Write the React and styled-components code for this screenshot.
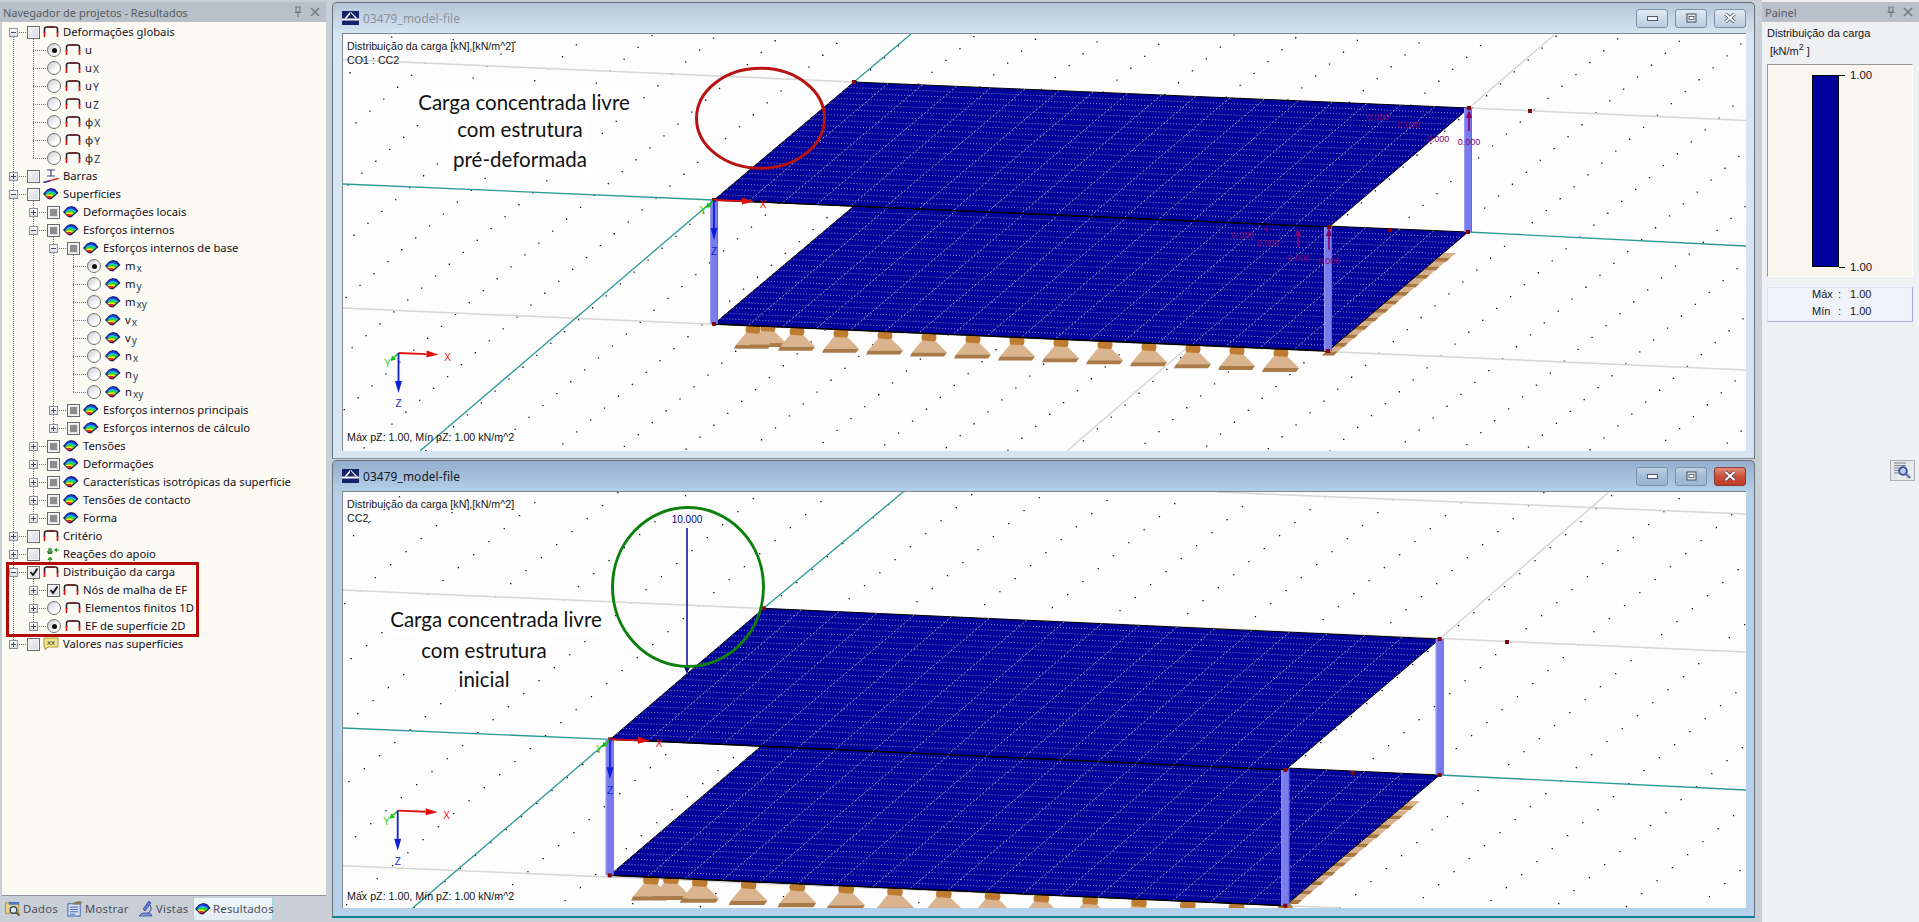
import React from 'react';
import styled, { createGlobalStyle } from 'styled-components';

const GlobalStyle = createGlobalStyle`
  html, body {
    margin: 0;
    height: 100%;
    overflow: hidden;
    background: #c9cfd7;
  }
  #root {
    height: 100%;
  }
`;

const Page = styled.div`
  width: 1919px;
  height: 922px;
  display: grid;
  grid-template-columns: 326px 6px 1423px 7px 157px;
  font-family: "Noto Sans", sans-serif;
  color: #14101c;
`;

const Panel = styled.div`
  grid-column: ${p => p.$col};
  display: flex;
  flex-direction: column;
  height: 922px;
  padding-top: 2px;
  box-sizing: border-box;
`;

const PanelHeader = styled.div`
  height: 20px;
  flex: none;
  background: #b8c0ca;
  color: #565c64;
  font-family: "Noto Sans", sans-serif;
  font-size: 11px;
  display: flex;
  align-items: center;
  padding: 0 6px 0 3px;
  gap: 7px;
  span {
    flex: 1;
  }
  svg {
    display: block;
  }
`;

const Tree = styled.div`
  position: relative;
  height: 874px;
  flex: none;
  margin-left: 2px;
  box-sizing: border-box;
  padding-top: 1px;
  background: #fbfaf3;
  border-bottom: 1px solid #8d9299;
  font-size: 11.25px;
`;

const Guide = styled.div`
  position: absolute;
  left: ${p => p.$x - 2}px;
  top: ${p => p.$from - 22}px;
  height: ${p => p.$to - p.$from}px;
  border-left: 1px dotted #707070;
`;

const Row = styled.div`
  position: relative;
  height: 18px;
  display: flex;
  align-items: center;
  padding-left: ${p => 7 + p.$level * 20}px;
  white-space: nowrap;
`;

const Label = styled.span`
  margin-bottom: 2px;
`;

const Slot = styled.div`
  position: relative;
  width: 18px;
  height: 18px;
  flex: none;
  &::after {
    content: "";
    position: absolute;
    left: 4px;
    right: 1px;
    top: 9px;
    border-top: 1px dotted #707070;
  }
`;

const Expander = styled.div`
  position: absolute;
  z-index: 1;
  left: 0;
  top: 5px;
  width: 7px;
  height: 7px;
  border: 1px solid #8b93a0;
  background: linear-gradient(#ffffff, #d9dde6);
  &::before {
    content: "";
    position: absolute;
    left: 1px;
    right: 1px;
    top: 3px;
    height: 1px;
    background: #3e4a70;
  }
  &::after {
    content: "";
    display: ${p => (p.$open ? 'none' : 'block')};
    position: absolute;
    top: 1px;
    bottom: 1px;
    left: 3px;
    width: 1px;
    background: #3e4a70;
  }
`;

const CheckBox = styled.div`
  position: relative;
  width: 11px;
  height: 11px;
  flex: none;
  border: 1px solid #6a6a6a;
  background: linear-gradient(135deg, #f6f7fa, #d3d7e0);
  display: flex;
  align-items: center;
  justify-content: center;
  box-shadow: inset 0 0 0 1px #f4f4f6;
`;

const PartialMark = styled.div`
  width: 7px;
  height: 7px;
  background: #8d8d8d;
`;

const Radio = styled.div`
  width: 12px;
  height: 12px;
  margin-right: 1px;
  flex: none;
  border: 1px solid #6f6f6f;
  border-radius: 50%;
  background: linear-gradient(135deg, #c9ccd4, #ffffff 70%);
  display: flex;
  align-items: center;
  justify-content: center;
`;

const RadioDot = styled.div`
  width: 5px;
  height: 5px;
  border-radius: 50%;
  background: #111;
`;

const IconSlot = styled.div`
  width: 16px;
  height: 14px;
  margin-left: 3px;
  margin-right: 4px;
  flex: none;
  svg {
    display: block;
  }
`;

const Sub = styled.span`
  font-size: ${p => (p.$low ? 10 : 10.5)}px;
  position: relative;
  top: ${p => (p.$low ? 2 : 1)}px;
  margin-left: 1px;
  color: #2c3a58;
`;

const RedFrame = styled.div`
  position: absolute;
  left: 4px;
  top: 540px;
  width: 187px;
  height: 69px;
  border: 3px solid #b40a0a;
`;

const TabBar = styled.div`
  flex: 1;
  display: flex;
  align-items: center;
  padding: 0 0 1px 3px;
  font-size: 11.3px;
  color: #4a5060;
`;

const Tab = styled.div`
  display: flex;
  align-items: center;
  gap: 2px;
  width: ${p => p.$w}px;
  height: 22px;
  padding: 0 1px;
  box-sizing: border-box;
  letter-spacing: 0.25px;
  background: ${p => (p.$active ? 'linear-gradient(#eef6f7, #e3edf2)' : 'transparent')};
  border-left: 1px solid ${p => (p.$active ? '#9adbe0' : 'transparent')};
  border-right: 1px solid ${p => (p.$active ? '#9adbe0' : 'transparent')};
  border-radius: 0 0 3px 3px;
  svg {
    display: block;
    flex: none;
  }
`;

const Center = styled.div`
  grid-column: 3;
  display: flex;
  flex-direction: column;
  padding-top: 2px;
  gap: 1px;
`;

const Window = styled.div`
  height: ${p => p.$height}px;
  flex: none;
  box-sizing: border-box;
  display: flex;
  flex-direction: column;
  padding: 0 8px 0 9px;
  border: 1px solid #6a7078;
  border-bottom: ${p => (p.$active ? '2px solid #0a7f92' : '1px solid #8a9099')};
  border-radius: 5px 5px 0 0;
  background: ${p =>
    p.$active
      ? 'linear-gradient(#93afcd 0, #b6d0e9 32px, #b4d0ea 100%)'
      : 'linear-gradient(#b4c6d8 0, #d8e5f2 32px, #d6e4f2 100%)'};
`;

const TitleBar = styled.div`
  height: 30px;
  flex: none;
  display: flex;
  align-items: center;
  gap: 4px;
  font-size: 11.9px;
  letter-spacing: 0.1px;
  color: ${p => (p.$active ? '#101828' : '#8c9098')};
  svg {
    display: block;
  }
  span {
    flex: 1;
  }
`;

const WinButton = styled.div`
  width: 30px;
  height: 17px;
  margin-left: 3px;
  flex: none;
  border: 1px solid ${p => (p.$close ? '#8a3a35' : '#7b8ea5')};
  border-radius: 3px;
  background: ${p =>
    p.$close
      ? 'linear-gradient(#e08a78, #c9503c 50%, #c03c28)'
      : p.$active
        ? 'linear-gradient(#bdd0e3, #a3bcd6 50%, #9cb6d1)'
        : 'linear-gradient(#e2eaf3, #cbd9e7 50%, #bccddf)'};
  display: flex;
  align-items: center;
  justify-content: center;
`;

const Canvas = styled.div`
  position: relative;
  flex: none;
  height: ${p => p.$height}px;
  background: #fdfdfd;
  border-top: 1px solid #7f868e;
  border-left: 1px solid #7f868e;
  overflow: hidden;
  svg {
    display: block;
  }
`;

const CanvasText = styled.div`
  position: absolute;
  left: 4px;
  top: ${p => p.$top}px;
  font-family: "Liberation Sans", Arial, sans-serif;
  font-size: 10.7px;
  line-height: 14px;
  color: #151515;
  white-space: nowrap;
`;

const NoteLine = styled.div`
  position: absolute;
  left: ${p => p.$x}px;
  top: ${p => p.$y}px;
  transform: translateX(-50%);
  font-family: Lato, "Open Sans", sans-serif;
  font-size: 20.5px;
  line-height: 30px;
  padding: 0 3px;
  color: #111;
  background: #fff;
  white-space: nowrap;
`;

const SidePanel = styled(Panel)`
  background: #eef0f2;
  font-family: "Liberation Sans", Arial, sans-serif;
`;

const SideBody = styled.div`
  flex: 1;
  display: flex;
  flex-direction: column;
  padding: 3px 5px 0;
  font-size: 11px;
  color: #14141e;
`;

const SideTitle = styled.div`
  line-height: 16px;
  height: 18px;
`;

const Unit = styled.div`
  line-height: 17px;
  height: 16px;
  padding-left: 3px;
  sup {
    font-size: 9px;
    line-height: 0;
  }
`;

const LegendBox = styled.div`
  height: 213px;
  width: 146px;
  margin-top: 5px;
  box-sizing: border-box;
  flex: none;
  display: flex;
  padding: 10px 0 9px 44px;
  background: #f9f6ef;
  border-top: 1px solid #9a9a9a;
  border-left: 1px solid #9a9a9a;
  border-right: 1px solid #fff;
  border-bottom: 1px solid #fff;
`;

const LegendBar = styled.div`
  width: 25px;
  background: #00009a;
  border: 1px solid #000;
`;

const LegendScale = styled.div`
  flex: 1;
  display: flex;
  flex-direction: column;
  justify-content: space-between;
  margin: -7px 0;
`;

const LegendTick = styled.div`
  display: flex;
  align-items: center;
  gap: 5px;
  height: 14px;
  font-size: 11.4px;
  &::before {
    content: "";
    width: 6px;
    height: 1px;
    background: #000;
  }
`;

const StatBox = styled.div`
  margin-top: 10px;
  width: 146px;
  height: 35px;
  box-sizing: border-box;
  flex: none;
  background: #f1f3fb;
  border: 1px solid #dfe2f0;
  border-right-color: #a9a9e2;
  border-bottom-color: #a9a9e2;
  display: grid;
  grid-template-columns: 26px 12px auto;
  grid-auto-rows: 17px;
  align-content: center;
  padding-left: 44px;
`;

const ZoomButton = styled.div`
  width: 23px;
  height: 19px;
  margin-top: 138px;
  margin-left: 123px;
  border: 1px solid #aaaeb3;
  background: #e6e8ea;
  svg {
    display: block;
  }
`;

const PinClose = () => (
  <>
    <svg width="10" height="12" viewBox="0 0 10 12">
      <path d="M3 1h4v5H3zM1.500 6.500h7M5 7v4" fill="none" stroke="#737982" strokeWidth="1.200" />
    </svg>
    <svg width="10" height="10" viewBox="0 0 10 10">
      <path d="M1 1l8 8M9 1l-8 8" stroke="#737982" strokeWidth="1.500" />
    </svg>
  </>
);

const BeamIcon = () => (
  <svg width="16" height="14" viewBox="0 0 16 14">
    <path d="M1.500 8V4Q1.500 2 4 2H12Q14.500 2 14.500 4V8" fill="none" stroke="#2a2028" strokeWidth="1.600" />
    <path d="M1.500 7v5M14.500 7v5" stroke="#d81818" strokeWidth="1.700" />
    <path d="M4.500 2h7" stroke="#7a1818" strokeWidth="1.400" />
  </svg>
);

const SurfaceIcon = ({ scale = 1 }) => (
  <svg width={16 * scale} height={14 * scale} viewBox="0 0 16 14">
    <polygon points="0,7 4,2.500 8,1 12,2 15.500,6 8,12.500 5,12" fill="#16165c" />
    <polygon points="1,6.500 4.500,3 8,2 11.500,3 14,6 11,6 8,5 5,5.500" fill="#1d3fe0" />
    <polygon points="1.500,7.500 5,4.500 8,4 11,5 13.500,6.500 11,8 5,8" fill="#18c8d8" />
    <polygon points="2,8 5,6 8,5.500 11,6.500 12.500,7 9,10 5,9.500" fill="#30d030" />
    <polygon points="2.500,8.500 5,7.500 8,7.500 10.500,8 8,10.500 5,10" fill="#f4e818" />
    <polygon points="3,9.500 5.500,9 8.500,9 7.500,11.500 5,11" fill="#e82818" />
  </svg>
);

const BarIcon = () => (
  <svg width="16" height="14" viewBox="0 0 16 14">
    <path d="M4 1h8M8 1v6M4 7h8" stroke="#3a4a80" strokeWidth="1.200" fill="none" />
    <polygon points="0,13 14,9 16,9 16,10 1,14" fill="#c83030" />
    <polygon points="0,13 7,11 7,12.500 1,14" fill="#2030c0" />
  </svg>
);

const SupportIcon = () => (
  <svg width="16" height="16" viewBox="0 0 16 16">
    <path d="M4 4h6l-1 3H5z" fill="#3a7a3a" />
    <circle cx="7" cy="3" r="2.200" fill="#5a9a5a" />
    <path d="M16 3l-4 0M11.500 3l2-1.500v3z" stroke="#20a020" fill="#20a020" />
    <path d="M7 16v-4M7 10l2 2.500H5z" stroke="#20a020" fill="#20a020" />
  </svg>
);

const ValuesIcon = () => (
  <svg width="16" height="14" viewBox="0 0 16 14">
    <path d="M1 1h14v9H5l-3 3V10H1z" fill="#f6e48a" stroke="#a89440" />
    <text x="8" y="8" fontSize="8" textAnchor="middle" fontFamily="Liberation Sans" fill="#333">xx</text>
  </svg>
);

const DataIcon = () => (
  <svg width="16" height="16" viewBox="0 0 17 16">
    <rect x="0.500" y="1.500" width="14" height="11" fill="#e9d58a" stroke="#b09030" />
    <rect x="4" y="0.500" width="11" height="3" fill="#4a78c8" />
    <circle cx="9" cy="9" r="3.500" fill="#dfe8f5" stroke="#33475f" strokeWidth="1.500" />
    <path d="M12 12l3.500 3" stroke="#70502a" strokeWidth="2" />
  </svg>
);

const NotesIcon = () => (
  <svg width="16" height="17" viewBox="0 0 17 17">
    <rect x="1" y="3.500" width="13" height="13" fill="#dfe8fa" stroke="#3658a8" />
    <path d="M3 7h9M3 9.500h9M3 12h9M3 14.500h6" stroke="#3658a8" />
    <path d="M5 4Q8 0 16 1L15 4Q10 5 5 4z" fill="#8a7a60" />
  </svg>
);

const ViewsIcon = () => (
  <svg width="16" height="17" viewBox="0 0 16 17">
    <path d="M11 1l2 2-6 8-2-2z" fill="#5a78d0" stroke="#2c428e" strokeWidth="0.700" />
    <path d="M1 16h13l-2-3H4z" fill="#7a92de" stroke="#2c428e" strokeWidth="0.700" />
    <path d="M12 5Q15 10 10 13" fill="none" stroke="#2c428e" />
  </svg>
);

const MagnifierIcon = () => (
  <svg width="23" height="19" viewBox="0 0 23 19">
    <path d="M3 2h12M3 4.500h12M3 7h6M3 9.500h5M3 12h5" stroke="#7d848c" />
    <circle cx="12" cy="10" r="3.800" fill="#bcd0ef" stroke="#34469a" strokeWidth="1.800" />
    <path d="M15 13l4 4" stroke="#5a6cb8" strokeWidth="2.400" />
  </svg>
);

const icons = {
  beam: BeamIcon,
  surface: SurfaceIcon,
  bar: BarIcon,
  support: SupportIcon,
  values: ValuesIcon
};

const guides = [
  [13, 32, 644],
  [33, 32, 158],
  [33, 194, 518],
  [33, 572, 626],
  [53, 230, 428],
  [73, 248, 392]
];

const r = (level, exp, ctrl, icon, text, sub, low) => ({ level, exp, ctrl, icon, text, sub, low });

const rows = [
  r(0, '-', 'box', 'beam', 'Deformações globais'),
  r(1, '', 'on', 'beam', 'u'),
  r(1, '', 'off', 'beam', 'u', 'X'),
  r(1, '', 'off', 'beam', 'u', 'Y'),
  r(1, '', 'off', 'beam', 'u', 'Z'),
  r(1, '', 'off', 'beam', 'φ', 'X'),
  r(1, '', 'off', 'beam', 'φ', 'Y'),
  r(1, '', 'off', 'beam', 'φ', 'Z'),
  r(0, '+', 'box', 'bar', 'Barras'),
  r(0, '-', 'box', 'surface', 'Superfícies'),
  r(1, '+', 'partial', 'surface', 'Deformações locais'),
  r(1, '-', 'partial', 'surface', 'Esforços internos'),
  r(2, '-', 'partial', 'surface', 'Esforços internos de base'),
  r(3, '', 'on', 'surface', 'm', 'x', true),
  r(3, '', 'off', 'surface', 'm', 'y', true),
  r(3, '', 'off', 'surface', 'm', 'xy', true),
  r(3, '', 'off', 'surface', 'v', 'x', true),
  r(3, '', 'off', 'surface', 'v', 'y', true),
  r(3, '', 'off', 'surface', 'n', 'x', true),
  r(3, '', 'off', 'surface', 'n', 'y', true),
  r(3, '', 'off', 'surface', 'n', 'xy', true),
  r(2, '+', 'partial', 'surface', 'Esforços internos principais'),
  r(2, '+', 'partial', 'surface', 'Esforços internos de cálculo'),
  r(1, '+', 'partial', 'surface', 'Tensões'),
  r(1, '+', 'partial', 'surface', 'Deformações'),
  r(1, '+', 'partial', 'surface', 'Características isotrópicas da superfície'),
  r(1, '+', 'partial', 'surface', 'Tensões de contacto'),
  r(1, '+', 'partial', 'surface', 'Forma'),
  r(0, '+', 'box', 'beam', 'Critério'),
  r(0, '+', 'box', 'support', 'Reações do apoio'),
  r(0, '-', 'checked', 'beam', 'Distribuição da carga'),
  r(1, '+', 'checked', 'beam', 'Nós de malha de EF'),
  r(1, '+', 'off', 'beam', 'Elementos finitos 1D'),
  r(1, '+', 'on', 'beam', 'EF de superfície 2D'),
  r(0, '+', 'box', 'values', 'Valores nas superfícies')
];

const Control = ({ kind }) => {
  if (kind === 'on' || kind === 'off') {
    return <Radio>{kind === 'on' && <RadioDot />}</Radio>;
  }
  return (
    <CheckBox>
      {kind === 'partial' && <PartialMark />}
      {kind === 'checked' && (
        <svg width="10" height="10" viewBox="0 0 10 10">
          <path d="M1.500 5l2.500 3 4.500-6.500" fill="none" stroke="#111" strokeWidth="1.800" />
        </svg>
      )}
    </CheckBox>
  );
};

const TreeRow = ({ row }) => {
  const Icon = icons[row.icon];
  return (
    <Row $level={row.level}>
      <Slot>{row.exp && <Expander $open={row.exp === '-'} />}</Slot>
      <Control kind={row.ctrl} />
      <IconSlot>
        <Icon />
      </IconSlot>
      <Label>
        {row.text}
        {row.sub && <Sub $low={row.low}>{row.sub}</Sub>}
      </Label>
    </Row>
  );
};

// 3d model geometry, all numbers are page pixels, the svg viewBox maps them
const upperModel = {
  view: '342 34 1403 417',
  w: 1403,
  h: 417,
  dots: { o: [354.3, 122.3], a: [13.9, -11.9], b: [61.6, 2.6] },
  top: [[853, 82], [1468, 108], [1328, 227], [713, 200]],
  bottom: [[853, 206], [1467, 232], [1327, 351], [713, 324]],
  gray: [
    [[342, 59.5], [853, 82]],
    [[1468, 108], [1745, 120.5]],
    [[1468, 108], [1553, 35]],
    [[342, 308], [1745, 370]],
    [[1189, 345], [1066, 451]]
  ],
  teal: [
    [[342, 184], [713, 200]],
    [[1467, 232], [1745, 246]],
    [[713, 200], [419, 451]],
    [[853, 82], [910, 34]]
  ],
  nodes: [[853, 82], [1468, 108], [1328, 227], [713, 200], [1467, 232], [713, 324], [1327, 351], [1529, 111], [1389, 230]],
  rows: 22,
  cols: 18,
  backSupport: [767, 328],
  front: { x: 752, step: 44, n: 13, y: 329.8, slope: 0.044, s: 1 },
  side: { x: 1446, y: 257, dx: -10.2, dy: 8.5, n: 12 },
  axes: [713, 200],
  triad: [397.5, 353]
};

const lowerModel = {
  view: '342 492 1404 416',
  w: 1404,
  h: 416,
  dots: { o: [373.7, 577], a: [15.3, -13], b: [67.7, 3] },
  top: [[762.7, 608.3], [1438.7, 639], [1284.3, 770], [609.3, 739.3]],
  bottom: [[762.7, 744], [1438.7, 775], [1284.3, 905.7], [608.7, 875.3]],
  gray: [
    [[342, 590], [1745, 652]],
    [[1216, 492], [1745, 514]],
    [[1438.7, 639], [1608, 492]],
    [[342, 865.7], [1340, 908]]
  ],
  teal: [
    [[342, 728], [609.3, 739.3]],
    [[1438.7, 775], [1745, 790]],
    [[609.3, 739.3], [411.7, 908]],
    [[762.7, 608.3], [902, 492]]
  ],
  nodes: [[762.7, 608.3], [1438.7, 639], [1284.3, 770], [609.3, 739.3], [1438.7, 775], [608.7, 875.3], [1284.3, 905.7], [1506, 642], [1351.7, 773]],
  rows: 24,
  cols: 18,
  backSupport: [670, 880],
  front: { x: 650, step: 48.8, n: 14, y: 880.5, slope: 0.046, s: 1.05 },
  side: { x: 1410, y: 805, dx: -11.2, dy: 9.4, n: 11 },
  axes: [609, 739.3],
  triad: [396.7, 810.7]
};

const lerp = (p, q, t) => [p[0] + (q[0] - p[0]) * t, p[1] + (q[1] - p[1]) * t];
const pts = list => list.map(p => p.join(',')).join(' ');

const dotPath = ({ o, a, b }) => {
  let d = '';
  for (let j = -10; j < 40; j++) {
    for (let i = -50; i < 60; i++) {
      const x = o[0] + a[0] * i + b[0] * j;
      const y = o[1] + a[1] * i + b[1] * j;
      if (x > 342 && x < 1746 && y > 34 && y < 910) {
        d += `M${x.toFixed(1)} ${y.toFixed(1)}h1.300v1.300h-1.300z`;
      }
    }
  }
  return d;
};

const Slab = ({ corners, rows: nRows, cols }) => {
  const [bl, br, fr, fl] = corners;
  let h = '';
  for (let i = 1; i < nRows; i++) {
    const p = lerp(bl, fl, i / nRows);
    const q = lerp(br, fr, i / nRows);
    h += `M${p[0].toFixed(1)} ${p[1].toFixed(1)}L${q[0].toFixed(1)} ${q[1].toFixed(1)}`;
  }
  let v = '';
  for (let i = 1; i < cols; i++) {
    const p = lerp(bl, br, i / cols);
    const q = lerp(fl, fr, i / cols);
    v += `M${p[0].toFixed(1)} ${p[1].toFixed(1)}L${q[0].toFixed(1)} ${q[1].toFixed(1)}`;
  }
  return (
    <g>
      <polygon points={pts(corners)} fill="#00009a" stroke="#000" strokeWidth="1" />
      <path d={h} stroke="#b4b4d8" strokeWidth="0.800" strokeDasharray="1 2" fill="none" />
      <path d={v} stroke="#a0a2ac" strokeWidth="1" strokeDasharray="2 2" fill="none" />
      <path d={`M${fl.join(' ')}L${fr.join(' ')}`} stroke="#000" strokeWidth="1.400" />
    </g>
  );
};

const Support = ({ x, y, s = 1 }) => (
  <g transform={`translate(${x} ${y}) scale(${s})`}>
    <ellipse cx="0" cy="0" rx="7.500" ry="7" fill="#bd7c32" />
    <polygon points="-7,3 7,4 18,15 -17,15" fill="#dab48e" />
    <polygon points="-17,15 18,15 15,19 -19,19" fill="#aa7a48" />
  </g>
);

const SideSupport = ({ x, y }) => (
  <g transform={`translate(${x} ${y})`}>
    <polygon points="-3,-4 9,-4 3,1 -9,1" fill="#d6ae87" />
    <polygon points="-9,1 3,1 -1,5 -13,5" fill="#a87740" />
  </g>
);

const Arrow = ({ from, to, color, w = 2, head = 5, len = 12 }) => {
  const dx = to[0] - from[0];
  const dy = to[1] - from[1];
  const l = Math.hypot(dx, dy) || 1;
  const ux = dx / l;
  const uy = dy / l;
  const bx = to[0] - ux * len;
  const by = to[1] - uy * len;
  return (
    <g>
      <line x1={from[0]} y1={from[1]} x2={bx} y2={by} stroke={color} strokeWidth={w} />
      <polygon
        points={`${to[0]},${to[1]} ${bx - uy * head * 0.7},${by + ux * head * 0.7} ${bx + uy * head * 0.7},${by - ux * head * 0.7}`}
        fill={color}
      />
    </g>
  );
};

const AxisText = styled.text`
  font-family: "Liberation Sans", Arial, sans-serif;
  font-size: ${p => p.$size || 10}px;
`;

const Axes = ({ at, zLen, zText, width = 1.800 }) => {
  const [x, y] = at;
  return (
    <g>
      <Arrow from={[x, y]} to={[x + 40, y + 1.500]} color="#e01010" w={width} />
      <Arrow from={[x, y]} to={[x - 8, y + 8]} color="#12c012" w={1.500} head={4} len={5} />
      <Arrow from={[x, y]} to={[x, y + zLen]} color="#0f1fd8" w={width} />
      <AxisText x={x + 49} y={y + 8} textAnchor="middle" fill="#f01010">X</AxisText>
      <AxisText x={x - 11} y={y + 14} textAnchor="middle" fill="#20d020">Y</AxisText>
      <AxisText x={x} y={y + zText} textAnchor="middle" fill="#0f1fd8">Z</AxisText>
    </g>
  );
};

const Column = ({ x, from, to }) => (
  <g>
    <rect x={x - 4} y={from} width="8" height={to - from} fill="#7a7cee" />
    <rect x={x - 4} y={from} width="1" height={to - from} fill="#9a9cf4" />
    <rect x={x + 3} y={from} width="1" height={to - from} fill="#6466e0" />
  </g>
);

const Model = ({ m, children }) => {
  const sup = [];
  for (let i = 0; i < m.front.n; i++) {
    const x = m.front.x + i * m.front.step;
    sup.push(<Support key={i} x={x} y={m.front.y + (x - m.front.x) * m.front.slope} s={m.front.s} />);
  }
  const side = [];
  for (let i = 0; i < m.side.n; i++) {
    side.push(<SideSupport key={i} x={m.side.x + i * m.side.dx} y={m.side.y + i * m.side.dy} />);
  }
  return (
    <svg width={m.w} height={m.h} viewBox={m.view}>
      <path d={dotPath(m.dots)} fill="#111" />
      {m.gray.map((l, i) => (
        <line key={i} x1={l[0][0]} y1={l[0][1]} x2={l[1][0]} y2={l[1][1]} stroke="#d6d6d6" strokeWidth="1.500" />
      ))}
      {m.teal.map((l, i) => (
        <line key={i} x1={l[0][0]} y1={l[0][1]} x2={l[1][0]} y2={l[1][1]} stroke="#2b9a96" strokeWidth="1.300" />
      ))}
      <Support x={m.backSupport[0]} y={m.backSupport[1]} s={m.front.s} />
      {side}
      {sup}
      <Slab corners={m.bottom} rows={m.rows} cols={m.cols} />
      <Slab corners={m.top} rows={m.rows} cols={m.cols} />
      <Column x={m.bottom[3][0]} from={m.top[3][1]} to={m.bottom[3][1]} />
      <Column x={m.bottom[1][0]} from={m.top[1][1]} to={m.bottom[1][1]} />
      <Column x={m.bottom[2][0]} from={m.top[2][1]} to={m.bottom[2][1]} />
      {m.nodes.map((n, i) => (
        <rect key={i} x={n[0] - 2} y={n[1] - 2} width="4" height="4" fill="#800808" />
      ))}
      <Axes at={m.axes} zLen={40} zText={55} />
      <Axes at={m.triad} zLen={40} zText={54} />
      {children}
    </svg>
  );
};

const purple = '#86006e';

const UpperExtras = () => (
  <g>
    {[
      [1376.7, 120],
      [1407.7, 127.5],
      [1437, 142],
      [1468, 145],
      [1241.7, 238],
      [1266.7, 246],
      [1297.7, 261],
      [1328, 264]
    ].map(([x, y], i) => (
      <AxisText key={i} x={x} y={y} textAnchor="middle" fill={purple} $size={9}>0.000</AxisText>
    ))}
    <Arrow from={[1468, 131]} to={[1468, 110]} color={purple} w={1.600} head={4.500} len={8} />
    <Arrow from={[1328, 250]} to={[1328, 228]} color={purple} w={1.600} head={4.500} len={8} />
    <Arrow from={[1297, 247]} to={[1297, 228]} color={purple} w={1.600} head={4.500} len={8} />
    <line x1="1266" y1="227" x2="1266" y2="232" stroke={purple} strokeWidth="1.600" />
    <ellipse cx="759.500" cy="118.300" rx="64" ry="50" fill="none" stroke="#b81212" strokeWidth="3" />
  </g>
);

const LowerExtras = () => (
  <g>
    <line x1="686" y1="528" x2="686" y2="668" stroke="#000090" strokeWidth="1.500" />
    <polygon points="686,674 683,667 689,667" fill="#000090" />
    <AxisText x="686" y="523" textAnchor="middle" fill="#000080" $size={10}>10.000</AxisText>
    <ellipse cx="687" cy="587" rx="75.500" ry="79.500" fill="none" stroke="#0c800c" strokeWidth="3" />
  </g>
);

const Logo = () => (
  <svg width="17" height="14" viewBox="0 0 17 14">
    <rect width="17" height="14" fill="#15246a" />
    <path d="M0 7.500h17v2H0z" fill="#fff" />
    <path d="M8 1L2.500 7.500h2L8 3.500zM8 1l1 0L15.500 7.500h-2z" fill="#fff" />
  </svg>
);

const WinButtons = ({ active }) => (
  <>
    <WinButton $active={active}>
      <svg width="11" height="5" viewBox="0 0 11 5">
        <rect x="0.500" y="0.500" width="10" height="4" fill="#f4f6f8" stroke="#50586a" />
      </svg>
    </WinButton>
    <WinButton $active={active}>
      <svg width="11" height="10" viewBox="0 0 11 10">
        <rect x="1" y="1" width="9" height="8" fill="#e6ecf3" stroke="#40485a" />
        <rect x="3" y="3.500" width="5" height="3" fill="#fff" stroke="#40485a" strokeWidth="0.800" />
      </svg>
    </WinButton>
    <WinButton $active={active} $close={active}>
      <svg width="12" height="10" viewBox="0 0 12 10">
        <path d="M1.500 1l9 8M10.500 1l-9 8" stroke="#39404e" strokeWidth="3.400" />
        <path d="M1.500 1l9 8M10.500 1l-9 8" stroke="#fff" strokeWidth="2" />
      </svg>
    </WinButton>
  </>
);

const App = () => (
  <>
    <GlobalStyle />
    <Page>
      <Panel $col={1}>
        <PanelHeader>
          <span>Navegador de projetos - Resultados</span>
          <PinClose />
        </PanelHeader>
        <Tree>
          {guides.map(([x, from, to], i) => (
            <Guide key={i} $x={x} $from={from} $to={to} />
          ))}
          {rows.map((row, i) => (
            <TreeRow key={i} row={row} />
          ))}
          <RedFrame />
        </Tree>
        <TabBar>
          <Tab $w={62}><DataIcon />Dados</Tab>
          <Tab $w={71}><NotesIcon />Mostrar</Tab>
          <Tab $w={57}><ViewsIcon />Vistas</Tab>
          <Tab $w={80} $active><SurfaceIcon />Resultados</Tab>
        </TabBar>
      </Panel>

      <Center>
        <Window $height={457}>
          <TitleBar>
            <Logo />
            <span>03479_model-file</span>
            <WinButtons />
          </TitleBar>
          <Canvas $height={417}>
            <Model m={upperModel}>
              <UpperExtras />
            </Model>
            <CanvasText $top={5}>
              Distribuição da carga [kN],[kN/m^2]
              <br />
              CO1 : CC2
            </CanvasText>
            <CanvasText $top={396}>Máx pZ: 1.00, Mín pZ: 1.00 kN/m^2</CanvasText>
            <NoteLine $x={181} $y={53}>Carga concentrada livre</NoteLine>
            <NoteLine $x={177} $y={80}>com estrutura</NoteLine>
            <NoteLine $x={177} $y={110}>pré-deformada</NoteLine>
          </Canvas>
        </Window>
        <Window $height={458} $active>
          <TitleBar $active>
            <Logo />
            <span>03479_model-file</span>
            <WinButtons active />
          </TitleBar>
          <Canvas $height={416}>
            <Model m={lowerModel}>
              <LowerExtras />
            </Model>
            <CanvasText $top={5}>
              Distribuição da carga [kN],[kN/m^2]
              <br />
              CC2.
            </CanvasText>
            <CanvasText $top={397}>Máx pZ: 1.00, Mín pZ: 1.00 kN/m^2</CanvasText>
            <NoteLine $x={153} $y={112}>Carga concentrada livre</NoteLine>
            <NoteLine $x={141} $y={143}>com estrutura</NoteLine>
            <NoteLine $x={141} $y={172}>inicial</NoteLine>
          </Canvas>
        </Window>
      </Center>

      <SidePanel $col={5}>
        <PanelHeader>
          <span>Painel</span>
          <PinClose />
        </PanelHeader>
        <SideBody>
          <SideTitle>Distribuição da carga</SideTitle>
          <Unit>[kN/m<sup>2</sup> ]</Unit>
          <LegendBox>
            <LegendBar />
            <LegendScale>
              <LegendTick>1.00</LegendTick>
              <LegendTick>1.00</LegendTick>
            </LegendScale>
          </LegendBox>
          <StatBox>
            <span>Máx</span><span>:</span><span>1.00</span>
            <span>Mín</span><span>:</span><span>1.00</span>
          </StatBox>
          <ZoomButton>
            <MagnifierIcon />
          </ZoomButton>
        </SideBody>
      </SidePanel>
    </Page>
  </>
);

export default App;
